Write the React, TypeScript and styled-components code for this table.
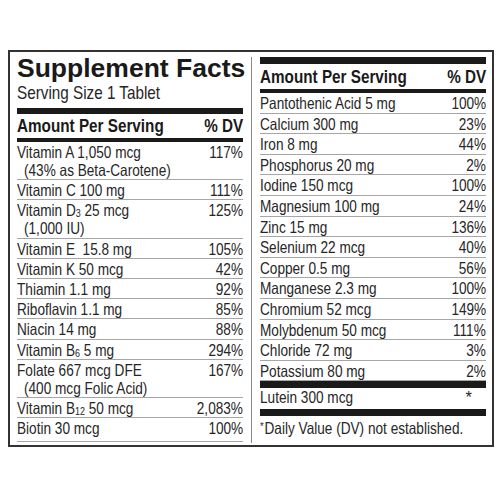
import React from "react";
import styled, { createGlobalStyle } from "styled-components";

const GlobalStyle = createGlobalStyle`
  html, body {
    margin: 0;
    padding: 0;
    background: #ffffff;
  }
`;

const Panel = styled.div`
  margin: 50px 0 0 8px;
  width: 486px;
  height: 397px;
  box-sizing: border-box;
  border: 2px solid #333;
  display: grid;
  grid-template-columns: 226px 1px 226px;
  column-gap: 8px;
  padding: 0 6px 0 7px;
  color: #262626;
  font-family: "Liberation Sans", Arial, sans-serif;
`;

const Column = styled.div<{ $top: number }>`
  display: flex;
  flex-direction: column;
  padding-top: ${(p) => p.$top}px;
`;

const Divider = styled.div`
  margin: 5px 0 2px;
  background: #8a8a8a;
`;

// the label face is a condensed grotesque; squeeze the metric-compatible sans to match
const Cond = styled.span<{ $origin?: "left" | "right" }>`
  display: inline-block;
  white-space: nowrap;
  transform: scaleX(0.825);
  transform-origin: ${(p) => p.$origin ?? "left"} center;
`;

const Title = styled.h1`
  margin: 0;
  font: 800 26.5px/28px "Liberation Sans", Arial, sans-serif;
  color: #1a1a1a;
  white-space: nowrap;
`;

const ServingSize = styled.div`
  font-size: 18.5px;
  line-height: 22px;
`;

const Bar = styled.div<{ $h: number; $mt?: number }>`
  height: ${(p) => p.$h}px;
  margin-top: ${(p) => p.$mt ?? 0}px;
  background: #1a1a1a;
`;

const HeaderRow = styled.div<{ $mt?: number }>`
  display: flex;
  justify-content: space-between;
  margin-top: ${(p) => p.$mt ?? 0}px;
  font-size: 18.5px;
  font-weight: 700;
  line-height: 22px;
  color: #1a1a1a;
`;

const Row = styled.div<{ $lh: number; $last?: boolean }>`
  display: flex;
  justify-content: space-between;
  align-items: flex-start;
  padding: 1px 0 ${(p) => (p.$last ? 3 : 0)}px;
  border-bottom: 1px solid #a6a6a6;
  font-size: 16.5px;
  line-height: ${(p) => p.$lh}px;
`;

const PlainRow = styled(Row)`
  border-bottom: none;
  padding: 0;
`;

const Name = styled.div`
  display: flex;
  flex-direction: column;
  align-items: flex-start;
`;

const Indent = styled.div`
  padding-left: 7px;
`;

const Value = styled.span<{ $pr?: number }>`
  text-align: right;
  padding-right: ${(p) => p.$pr ?? 0}px;
`;

const Sub = styled.sub`
  font-size: 0.66em;
  vertical-align: -0.12em;
  line-height: 0;
`;

const Footnote = styled.div`
  margin-top: 1px;
  font-size: 16.5px;
  line-height: 19px;
`;

const Star = styled.span`
  font-size: 0.7em;
  vertical-align: 0.35em;
  margin-right: 1px;
`;

type Item = { name: React.ReactNode; extra?: string; dv: string };

const leftItems: Item[] = [
  { name: "Vitamin A 1,050 mcg", extra: "(43% as Beta-Carotene)", dv: "117%" },
  { name: "Vitamin C 100 mg", dv: "111%" },
  {
    name: (
      <>
        Vitamin D<Sub>3</Sub> 25 mcg
      </>
    ),
    extra: "(1,000 IU)",
    dv: "125%",
  },
  { name: "Vitamin E\u00a0 15.8 mg", dv: "105%" },
  { name: "Vitamin K 50 mcg", dv: "42%" },
  { name: "Thiamin 1.1 mg", dv: "92%" },
  { name: "Riboflavin 1.1 mg", dv: "85%" },
  { name: "Niacin 14 mg", dv: "88%" },
  {
    name: (
      <>
        Vitamin B<Sub>6</Sub> 5 mg
      </>
    ),
    dv: "294%",
  },
  { name: "Folate 667 mcg DFE", extra: "(400 mcg Folic Acid)", dv: "167%" },
  {
    name: (
      <>
        Vitamin B<Sub>12</Sub> 50 mcg
      </>
    ),
    dv: "2,083%",
  },
  { name: "Biotin 30 mcg", dv: "100%" },
];

const rightItems: Item[] = [
  { name: "Pantothenic Acid 5 mg", dv: "100%" },
  { name: "Calcium 300 mg", dv: "23%" },
  { name: "Iron 8 mg", dv: "44%" },
  { name: "Phosphorus 20 mg", dv: "2%" },
  { name: "Iodine 150 mcg", dv: "100%" },
  { name: "Magnesium 100 mg", dv: "24%" },
  { name: "Zinc 15 mg", dv: "136%" },
  { name: "Selenium 22 mcg", dv: "40%" },
  { name: "Copper 0.5 mg", dv: "56%" },
  { name: "Manganese 2.3 mg", dv: "100%" },
  { name: "Chromium 52 mcg", dv: "149%" },
  { name: "Molybdenum 50 mcg", dv: "111%" },
  { name: "Chloride 72 mg", dv: "3%" },
  { name: "Potassium 80 mg", dv: "2%" },
];

const NutrientRow: React.FC<{ item: Item; lh: number; last?: boolean }> = ({
  item,
  lh,
  last,
}) => (
  <Row $lh={lh} $last={last}>
    <Name>
      <Cond>{item.name}</Cond>
      {item.extra && (
        <Indent>
          <Cond>{item.extra}</Cond>
        </Indent>
      )}
    </Name>
    <Value>
      <Cond $origin="right">{item.dv}</Cond>
    </Value>
  </Row>
);

const Header: React.FC<{ mt: number }> = ({ mt }) => (
  <HeaderRow $mt={mt}>
    <Cond>Amount Per Serving</Cond>
    <Cond $origin="right">% DV</Cond>
  </HeaderRow>
);

export default function App() {
  return (
    <>
      <GlobalStyle />
      <Panel>
        <Column $top={2}>
          <Title>Supplement Facts</Title>
          <ServingSize>
            <Cond>Serving Size 1 Tablet</Cond>
          </ServingSize>
          <Bar $h={6} $mt={3.5} />
          <Header mt={1.5} />
          <Bar $h={3.5} $mt={1} />
          {leftItems.map((item, i) => (
            <NutrientRow
              key={i}
              item={item}
              lh={18.2}
              last={i === leftItems.length - 1}
            />
          ))}
        </Column>
        <Divider />
        <Column $top={5}>
          <Bar $h={7} />
          <Header mt={2} />
          <Bar $h={4} $mt={1} />
          {rightItems.map((item, i) => (
            <NutrientRow key={i} item={item} lh={18.6} />
          ))}
          <Bar $h={7} />
          <PlainRow $lh={19}>
            <Cond>Lutein 300 mcg</Cond>
            <Value $pr={14}>*</Value>
          </PlainRow>
          <Bar $h={7} $mt={2} />
          <Footnote>
            <Cond>
              <Star>*</Star>Daily Value (DV) not established.
            </Cond>
          </Footnote>
        </Column>
      </Panel>
    </>
  );
}
